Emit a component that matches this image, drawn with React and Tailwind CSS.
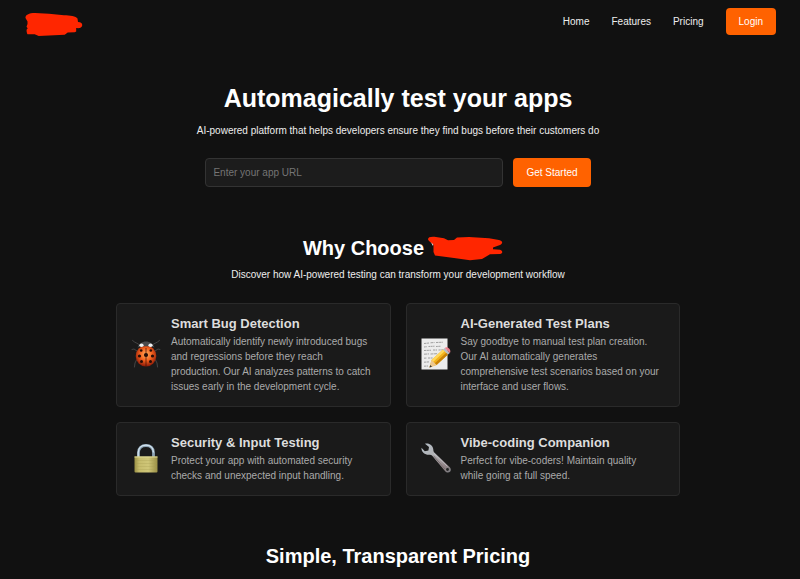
import React from 'react';

const BugIcon = () => (
  <svg width="30" height="30" viewBox="0 0 30 30" fill="none" aria-hidden="true">
    <defs>
      <radialGradient id="shell" cx="0.5" cy="0.42" r="0.58">
        <stop offset="0" stopColor="#ffb060" />
        <stop offset="0.5" stopColor="#f4621e" />
        <stop offset="1" stopColor="#8c1a08" />
      </radialGradient>
    </defs>
    <g stroke="#484848" strokeWidth="0.9" strokeLinecap="round" strokeLinejoin="round">
      <path d="M9 6.500C7.500 4 4.500 4.500 1.500 1.500M21 6.500c1.500-2.500 4.500-2 7.500-5" />
      <path d="M6 12l-3-2-2 .5M24 12l3-2 2 .5" />
      <path d="M5.500 21l-1.500 3-.5 4M24.500 21l1.500 3 .5 4" />
    </g>
    <ellipse cx="15" cy="17" rx="10.300" ry="10.500" fill="url(#shell)" />
    <path d="M15 9v18.500" stroke="#3b0c04" strokeWidth="0.7" />
    <path d="M6.500 8.500C8 5 11 2.500 15 2.500s7 2.500 8.500 6c-3-1-5.500-1.200-8.500-1.200s-5.500.2-8.500 1.200z" fill="#4a4a4c" />
    <ellipse cx="10.500" cy="6.200" rx="2.100" ry="1.700" fill="#f0f0f0" />
    <ellipse cx="19.500" cy="6.200" rx="2.100" ry="1.700" fill="#f0f0f0" />
    <g fill="#240d08">
      <circle cx="15" cy="16" r="2.100" />
      <circle cx="10.200" cy="11.500" r="1.300" />
      <circle cx="19.800" cy="11.500" r="1.300" />
      <circle cx="8.500" cy="17" r="1.600" />
      <circle cx="21.500" cy="17" r="1.600" />
      <circle cx="10.500" cy="22.500" r="1.500" />
      <circle cx="19.500" cy="22.500" r="1.500" />
    </g>
  </svg>
);

const MemoIcon = () => (
  <svg width="30" height="32" viewBox="0 0 30 32" fill="none" aria-hidden="true">
    <path d="M.5.500h26v31H.5z" fill="#ececec" />
    <g stroke="#8a8a8a" strokeWidth="0.800">
      <path d="M3 5.500l5-.5M9.500 4.800l4-.3M15 4.500l7-.3" strokeDasharray="2.500 .6" />
      <path d="M3 9l3-.3M7.500 8.500l6-.3M15 8.500l5-.3" strokeDasharray="1.800 .5" />
      <path d="M3 12.500l7-.3M12 12h4M17.500 12l5-.2" strokeDasharray="2.200 .5" />
      <path d="M3 16.200l5-.3M9.500 16l7-.3" strokeDasharray="3 .6" />
      <path d="M3 20.200l3-.2M7 20h5" strokeDasharray="2 .6" />
      <path d="M3 24.200l5-.3M3 28.200l4-.2" strokeDasharray="2.400 .5" />
    </g>
    <path d="M8.500 29.500l2-7.500L22 11.500l5 5L15.500 27z" fill="#f3b21b" />
    <path d="M10.500 22L22 11.500l1.700 1.700L12.300 23.700z" fill="#ffd75a" />
    <path d="M13.800 25.300L25.300 14.800l1.700 1.700L15.500 27z" fill="#c98207" />
    <path d="M8.500 29.500l2-7.500 5 5z" fill="#edc890" />
    <path d="M8.500 29.500l.7-2.600 1.800 1.800z" fill="#333" />
    <path d="M22 11.500l1.800-1.600 5 5-1.800 1.600z" fill="#b9bdc2" />
    <path d="M23.800 9.900c1.200-1.100 2.800-.8 4.200.6s1.800 3.200.8 4.400z" fill="#ee7f8c" />
  </svg>
);

const LockIcon = () => (
  <svg width="24" height="30" viewBox="0 0 24 30" fill="none" aria-hidden="true">
    <defs>
      <linearGradient id="brass" x1="0" x2="1">
        <stop offset="0" stopColor="#9a9044" />
        <stop offset="0.2" stopColor="#c6bc6c" />
        <stop offset="0.6" stopColor="#cfc678" />
        <stop offset="1" stopColor="#9a8f45" />
      </linearGradient>
    </defs>
    <path d="M4.500 14V9.500C4.500 5 7.500 2.500 12 2.500s7.500 2.500 7.500 7V14" stroke="#8da3b4" strokeWidth="2.800" />
    <path d="M4.200 14V9.500C4.200 5 7.500 2.200 12 2.200s7.500 2.800 7.500 7.300" stroke="#d3e4f0" strokeWidth="1.300" />
    <path d="M.5 13.500h23v15a1 1 0 0 1-1 1h-21a1 1 0 0 1-1-1z" fill="url(#brass)" />
    <path d="M.5 14h23" stroke="#e2dc98" />
    <path d="M1 17.500h22M1 20.500h22M1 23.500h22M1 26.500h22" stroke="#a89d50" strokeWidth="0.300" />
  </svg>
);

const WrenchIcon = () => (
  <svg width="30" height="30" viewBox="0 0 30 30" fill="none" aria-hidden="true">
    <defs>
      <linearGradient id="steel" x1="0" y1="0" x2="1" y2="1">
        <stop offset="0" stopColor="#b4bfc8" />
        <stop offset="0.4" stopColor="#b2b2b5" />
        <stop offset="0.8" stopColor="#8f8184" />
        <stop offset="1" stopColor="#7a7d81" />
      </linearGradient>
    </defs>
    <path
      d="M4 .8C8-.3 12 2.500 12.300 6.500c.1 1.500.3 2.300 1 3.100L28.300 23.800c2 1.700 1.800 3.900.7 5s-3.500 1.200-5-.8L11 12.500c-.8-.8-1.700-.8-3-.7C4 12 .2 9 .5 4.800l3.300 3.400 3.600-.8.6-3.400z"
      fill="url(#steel)"
    />
    <path d="M12.500 12.800L24 26" stroke="#75696c" strokeWidth="0.900" />
    <path d="M13 10.500L26.500 23.500" stroke="#cccfd2" strokeWidth="0.700" />
    <circle cx="26.500" cy="26.500" r="1.400" fill="#242424" />
  </svg>
);

const features = [
  {
    icon: BugIcon,
    title: 'Smart Bug Detection',
    text: 'Automatically identify newly introduced bugs and regressions before they reach production. Our AI analyzes patterns to catch issues early in the development cycle.',
  },
  {
    icon: MemoIcon,
    title: 'AI-Generated Test Plans',
    text: 'Say goodbye to manual test plan creation. Our AI automatically generates comprehensive test scenarios based on your interface and user flows.',
  },
  {
    icon: LockIcon,
    title: 'Security & Input Testing',
    text: 'Protect your app with automated security checks and unexpected input handling.',
  },
  {
    icon: WrenchIcon,
    title: 'Vibe-coding Companion',
    text: 'Perfect for vibe-coders! Maintain quality while going at full speed.',
  },
];

const App = () => {
  return (
    <div className="min-h-screen bg-[#111111] pr-1 font-['Liberation_Sans',Arial,sans-serif] text-[#eeeeee]">
      <header className="flex items-start justify-between pt-2 pr-5 pl-6">
        <a href="#home" aria-label="Home page" className="pt-1">
          <svg width="60" height="25" viewBox="0 0 60 25" aria-hidden="true">
            <path
              d="M1.500 6C1 3 5 1 11 1l14 .8 15 1.400c6 .3 12 .6 13.500 3.300l.5 3.500c3 0 4.500 1.500 4.200 3.500-.2 2-2.500 3-6 2.500v3.600l-1.500.6-7 .3-3 2.200-26 1.300-4-1.700H3.500C2.500 20 2 17 3.800 16.500L2.500 14.800 3.500 12V9.500z"
              fill="#ff2600"
            />
          </svg>
        </a>
        <nav className="flex items-center gap-[22px] text-[10px]">
          <a href="#home">Home</a>
          <a href="#features">Features</a>
          <a href="#pricing">Pricing</a>
          <button type="button" className="h-[27px] rounded bg-[#ff6200] px-[13px] text-white">
            Login
          </button>
        </nav>
      </header>

      <main>
        <section className="pt-[45px] text-center">
          <h1 className="text-[25px] leading-8 font-bold text-white">Automagically test your apps</h1>
          <p className="mt-2 text-[10px] leading-[18px]">
            AI-powered platform that helps developers ensure they find bugs before their customers do
          </p>
          <form className="mt-[18px] flex justify-center gap-[10px]" onSubmit={(e) => e.preventDefault()}>
            <input
              type="url"
              aria-label="App URL"
              placeholder="Enter your app URL"
              className="h-[29px] w-[298px] rounded border border-[#333333] bg-[#1c1c1c] px-[7px] text-[10px] placeholder:text-[#757575]"
            />
            <button type="submit" className="h-[29px] rounded bg-[#ff6200] px-[13px] text-[10px] text-white">
              Get Started
            </button>
          </form>
        </section>

        <section id="features" className="mx-auto max-w-[564px] pt-[47px]">
          <h2 className="flex items-center justify-center gap-1 text-[20px] leading-7 font-bold text-white">
            Why Choose
            <svg className="-mr-[10px]" width="75" height="25" viewBox="0 0 75 25" aria-hidden="true">
              <path d="M2 5l4 1-1 4-1-2z" fill="#fff" />
              <path
                d="M0 3.500C0 1 3 .5 8 1l8 1.200 4 2 6-.3 3-2.500 12-.5 20 1.400 10 1.800c3.500.8 4.500 3.200 1 5l-7 2.500v1.600l7 .5c3 1 3 3.800 0 4.300l-10 .2-5 3-3 1.800-12 1.300-16-2.300L7 19.500 5.500 16V8.500L1 5z"
                fill="#ff2600"
              />
            </svg>
          </h2>
          <p className="mt-[3px] text-center text-[10px] leading-5">
            Discover how AI-powered testing can transform your development workflow
          </p>
          <div className="mt-[18px] grid grid-cols-2 gap-[15px]">
            {features.map((feature) => {
              const Icon = feature.icon;
              return (
                <article
                  key={feature.title}
                  className="flex items-center gap-[10px] rounded border border-[#2a2a2a] bg-[#1a1a1a] pt-[10px] pr-[18px] pb-3 pl-[14px]"
                >
                  <div className="flex w-[30px] shrink-0 justify-center">
                    <Icon />
                  </div>
                  <div>
                    <h3 className="text-[13px] leading-5 font-bold text-[#dddddd]">{feature.title}</h3>
                    <p className="text-[10px] leading-[15px] text-[#aaaaaa]">{feature.text}</p>
                  </div>
                </article>
              );
            })}
          </div>
        </section>

        <section id="pricing" className="pt-[46px] pb-2 text-center">
          <h2 className="text-[20px] leading-7 font-bold text-white">Simple, Transparent Pricing</h2>
        </section>
      </main>
    </div>
  );
};

export default App;
